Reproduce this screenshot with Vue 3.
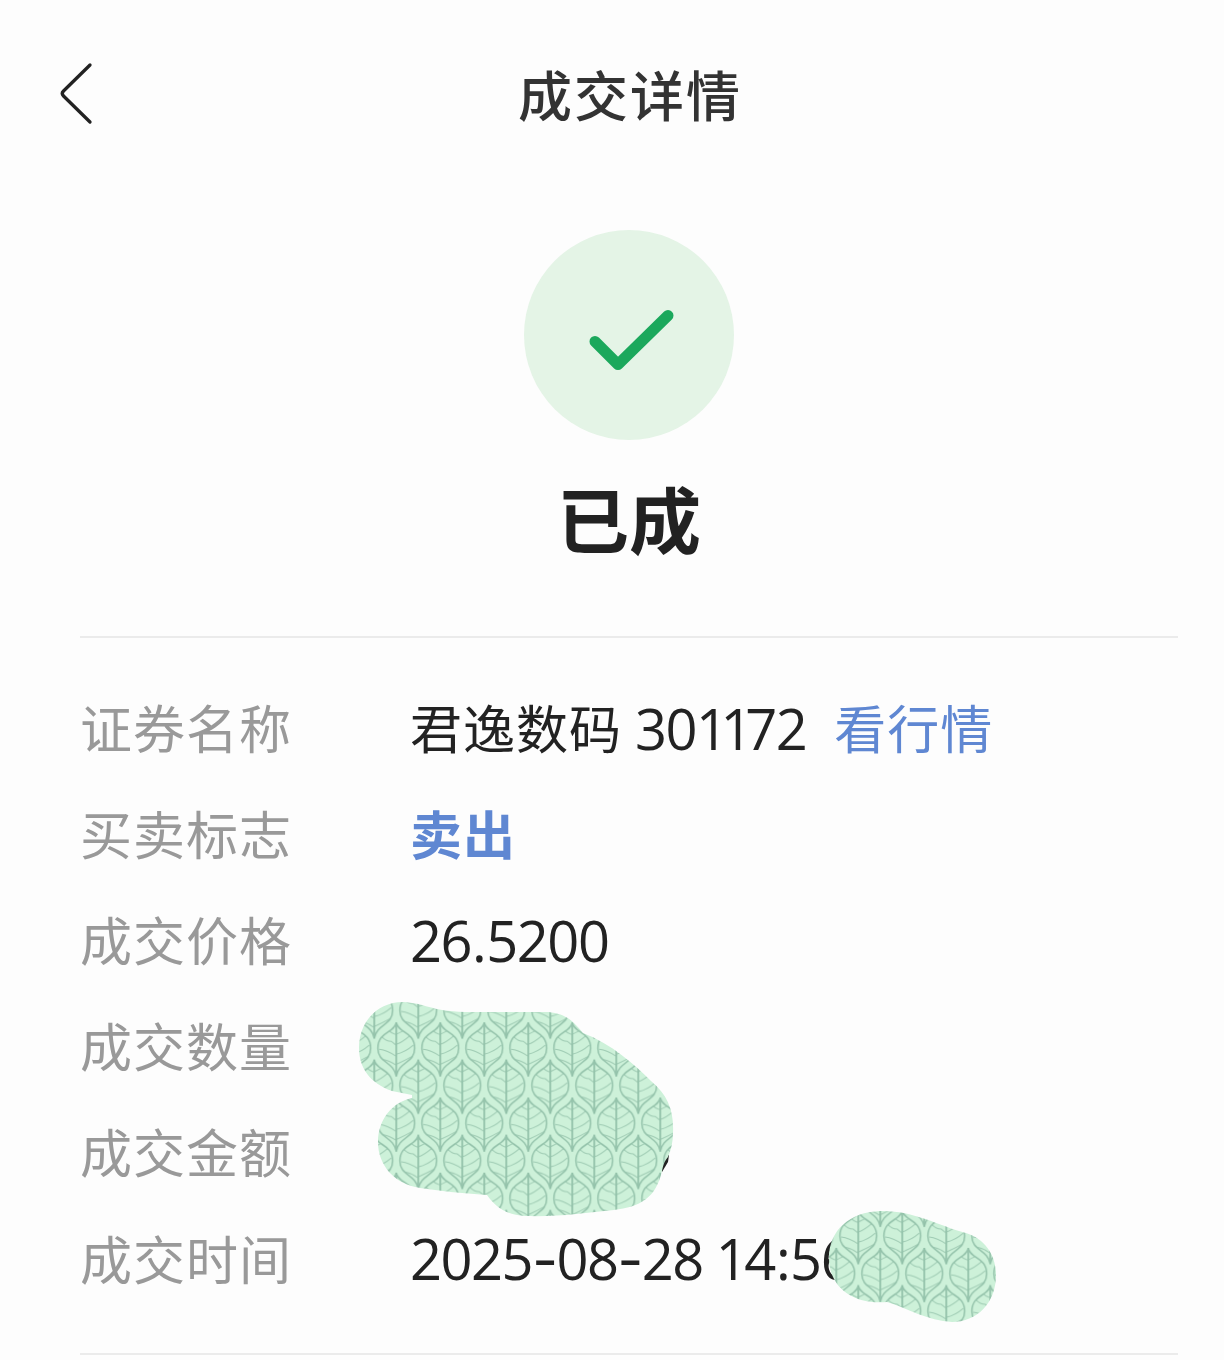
<template>
  <div class="page">
    <header class="nav">
      <svg class="back" viewBox="0 0 40 70" width="40" height="70">
        <path d="M34 9 L7.500 35 Q5 37.500 7.500 40 L34 66" />
      </svg>
      <h1>成交详情</h1>
    </header>

    <section class="status">
      <svg width="210" height="210" viewBox="0 0 210 210">
        <circle cx="105" cy="105" r="105" fill="#e4f4e6" />
        <path class="tick" d="M71 111.5 L94 134.5 L144 85.5" />
      </svg>
      <h2>已成</h2>
    </section>

    <dl class="details">
      <div v-for="row in rows" :key="row.label" class="row">
        <dt>{{ row.label }}</dt>
        <dd>
          <span v-if="row.name" class="name">{{ row.name }}</span>
          <b v-if="row.side">{{ row.side }}</b>
          <span v-if="row.number" class="number"><span v-for="(c, i) in row.number" :key="i" :class="charClass(c)">{{ c }}</span></span>
          <a v-if="row.link">{{ row.link }}</a>
        </dd>
      </div>
    </dl>

    <!-- leaf patches over the private values -->
    <svg class="mask" width="1224" height="1360" viewBox="0 0 1224 1360">
      <defs>
        <g id="leaf">
          <path class="vein" d="M-7 8.500 Q-5 11 0 12.500 M-14 15 Q-10 19 -5 19 L0 23 M-17 27 Q-9 28 0 34 M-14 37 Q-7 38 0 43 M0 12 L7 8.500 M0 22 Q6 20 13 14 M0 32 Q9 30 17 23 M0 42 Q9 38 16 34" />
          <path class="outline" d="M0 0 C-1.500 11 -18.400 9 -18.400 26 C-18.400 41 -2.500 39 0 54 C2.500 39 18.400 41 18.400 26 C18.400 9 1.500 11 0 0" />
          <path class="stem" d="M0 0 V54" />
        </g>
        <pattern id="leaves" x="374.300" y="1022.300" width="44" height="75.200" patternUnits="userSpaceOnUse">
          <rect width="44" height="75.200" fill="#cdf1d9" />
          <use href="#leaf" x="22" y="0" />
          <use href="#leaf" x="0" y="37.400" />
          <use href="#leaf" x="44" y="37.400" />
          <use href="#leaf" x="0" y="-37.800" />
          <use href="#leaf" x="44" y="-37.800" />
        </pattern>
      </defs>
      <path d="M669 1155 L668 1162 L662 1172 L660 1168 L664 1156 Z" fill="#222" />
      <path fill="url(#leaves)" d="M403 1002 C425 1003 430 1011 465 1012 H545 C565 1012 574 1022 583 1033 C612 1044 635 1065 651 1081 C668 1095 674 1111 673 1133 C673 1142 671 1150 668 1157 C664 1162 663 1166 662 1171 C656 1198 640 1207 614 1210 C585 1213 560 1217 525 1216 C505 1215 495 1206 487 1195 C460 1193 440 1191 420 1188 C394 1184 378 1165 378 1142 C378 1120 392 1102 412 1098 V1095 L392 1091 C370 1083 359 1068 359 1048 C359 1021 378 1002 403 1002 Z" />
      <path fill="url(#leaves)" d="M880 1211 C912 1210 937 1225 966 1233 C985 1239 996 1255 996 1275 C996 1303 977 1322 952 1322 C928 1321 907 1308 887 1302 C850 1305 829 1285 829 1258 C829 1230 850 1212 880 1211 Z" />
    </svg>
  </div>
</template>

<script setup>
const rows = [
  { label: '证券名称', name: '君逸数码', number: '301172', link: '看行情' },
  { label: '买卖标志', side: '卖出' },
  { label: '成交价格', number: '26.5200' },
  { label: '成交数量' },
  { label: '成交金额' },
  { label: '成交时间', number: '2025-08-28 14:56' },
];

// these characters are spaced differently from the other figures
const charClass = (c) => ({
  one: c === '1',
  four: c === '4',
  dash: c === '-',
  dot: c === '.' || c === ':',
});
</script>

<style>
body {
  background: #fdfdfd;
}
</style>

<style scoped>
.page {
  position: relative;
  width: 1224px;
  height: 1360px;
  box-sizing: border-box;
  overflow: hidden;
  background: #fdfdfd;
  color: #222;
  font-family: "Noto Sans CJK SC", sans-serif;
}

.nav {
  display: grid;
  grid-template-columns: 40px 1fr 40px;
  align-items: center;
  height: 190px;
  padding: 0 51px 0 56px;
  box-sizing: border-box;
}

.back {
  margin-bottom: 8px;
  fill: none;
  stroke: #222;
  stroke-width: 3.3;
  stroke-linecap: round;
}

h1 {
  margin: 0 0 2px;
  padding-left: 31px;
  font-size: 54px;
  line-height: 80px;
  font-weight: 500;
  letter-spacing: 2px;
  text-align: center;
  color: #333;
}

.status {
  display: flex;
  flex-direction: column;
  align-items: center;
  height: 448px;
  margin: 0 46px 0 80px;
  padding-top: 40px;
  box-sizing: border-box;
  border-bottom: 2px solid #ebebeb;
}

.status svg {
  flex: none;
}

.tick {
  fill: none;
  stroke: #1ba85c;
  stroke-width: 11;
  stroke-linecap: round;
  stroke-linejoin: round;
}

h2 {
  margin: 25px 0 0;
  font-size: 72px;
  line-height: 104px;
  font-weight: 700;
}

.details {
  height: 717px;
  margin: 0 46px 0 80px;
  padding-top: 37px;
  box-sizing: border-box;
  border-bottom: 2px solid #ebebeb;
}

.row {
  display: flex;
  align-items: center;
  height: 106.2px;
  font-size: 52px;
  line-height: 80px;
  letter-spacing: 1px;
}

dt {
  width: 330px;
  padding-bottom: 3px;
  color: #999;
}

dd {
  display: flex;
  align-items: center;
  margin: 0;
  white-space: pre;
}

b,
a {
  padding-bottom: 3px;
  color: #5f87d2;
}

.name {
  margin-right: 13px;
  padding-bottom: 3px;
}

a {
  margin-left: 28px;
}

.number {
  font-family: "Open Sans", sans-serif;
  font-size: 56px;
  letter-spacing: -1.5px;
}

.one {
  letter-spacing: -7.5px;
}

.four {
  margin-left: 4px;
}

.dot {
  margin: 0 1px;
}

.dash {
  font-family: Inter, sans-serif;
}

.mask {
  position: absolute;
  top: 0;
  left: 0;
}

.outline,
.stem,
.vein {
  fill: none;
  stroke: #93c2aa;
  stroke-width: 1.5;
}

.stem {
  stroke-width: 1.8;
}

.vein {
  stroke: #9dcab2;
  stroke-width: 1;
}
</style>
